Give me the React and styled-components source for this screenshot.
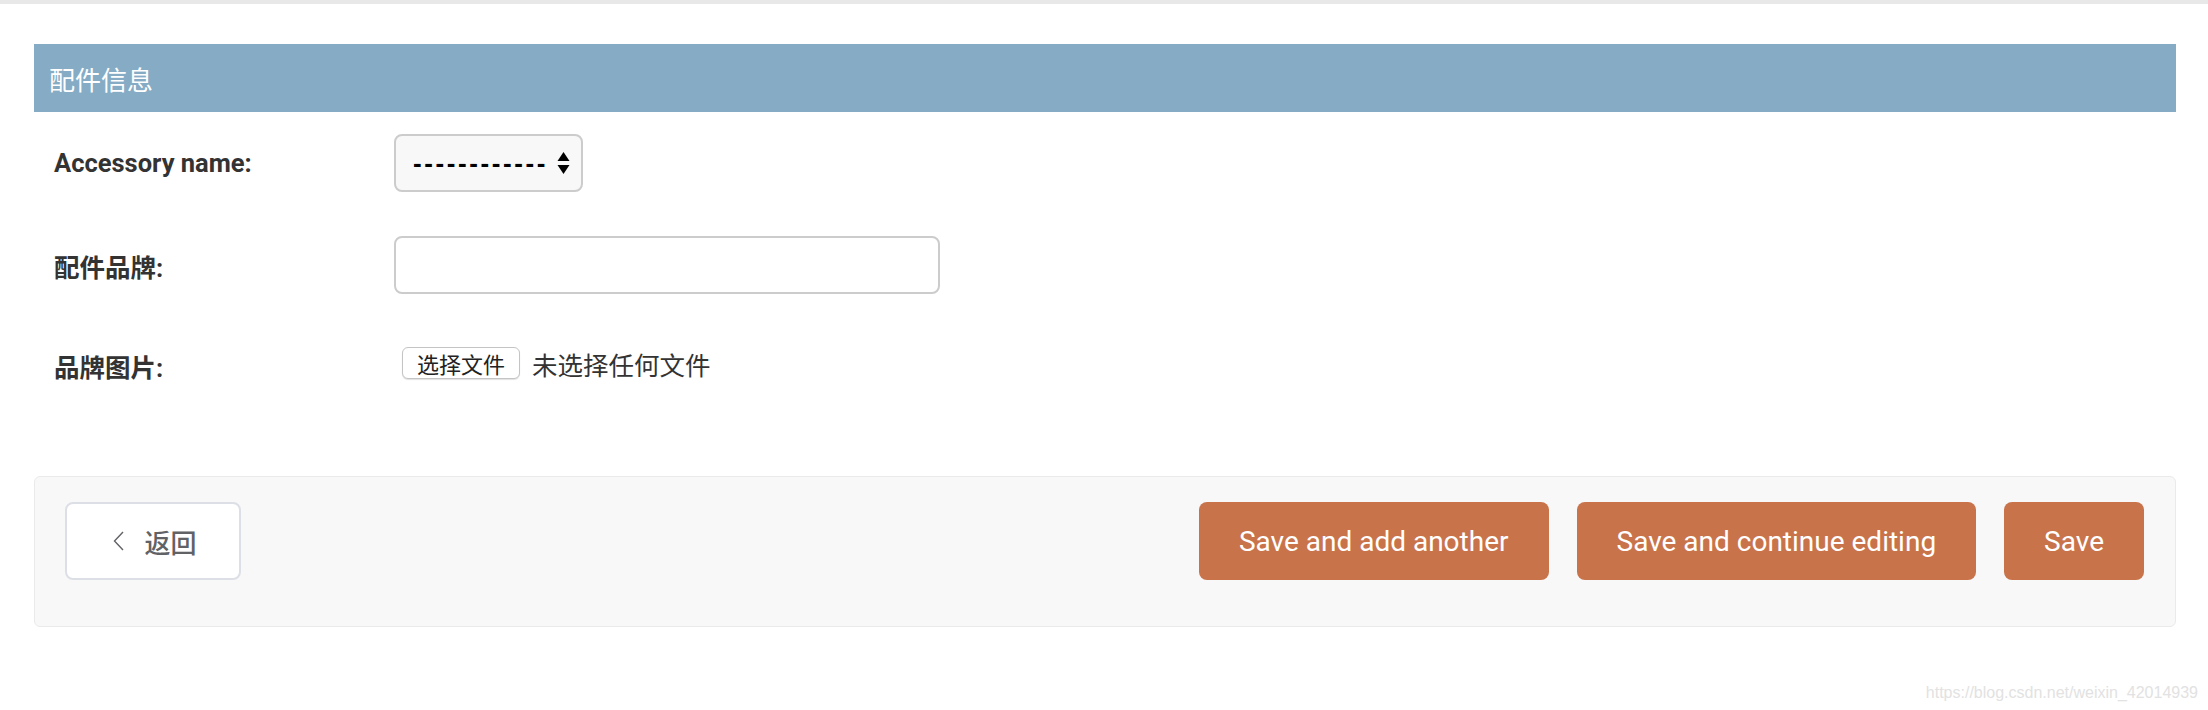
import React from "react";
import styled, { createGlobalStyle } from "styled-components";

const GlobalStyle = createGlobalStyle`
  html, body {
    margin: 0;
    padding: 0;
    background: #fff;
  }
  body {
    font-family: Roboto, "Noto Sans CJK SC", sans-serif;
    color: #333;
  }
`;

const Page = styled.div`
  position: relative;
  height: 710px;
  border-top: 4px solid #e8e8e8;
  box-sizing: border-box;
  padding: 40px 32px 0 34px;
`;

const Fieldset = styled.div`
  display: flex;
  flex-direction: column;
`;

const Caption = styled.h2`
  margin: 0;
  height: 68px;
  display: flex;
  align-items: center;
  padding-left: 15px;
  background: #85abc5;
  color: #fff;
  font-size: 26px;
  font-weight: 400;
`;

const Row = styled.div`
  display: flex;
  align-items: center;
  height: ${(p) => p.$height || 102}px;
  padding-left: 20px;
`;

const Label = styled.label`
  width: 340px;
  flex-shrink: 0;
  font-size: 25.5px;
  font-weight: 700;
  color: #333;
`;

const SelectBox = styled.div`
  width: 189px;
  height: 58px;
  box-sizing: border-box;
  border: 2px solid #ccc;
  border-radius: 8px;
  background: #f8f8f8;
  display: flex;
  align-items: center;
  padding: 0 8px 0 17px;
  gap: 9px;
`;

const Dashes = styled.span`
  white-space: nowrap;
  font-family: "Liberation Sans", sans-serif;
  font-size: 26px;
  font-weight: 700;
  letter-spacing: 2.6px;
  color: #000;
`;

const TextInput = styled.input`
  width: 546px;
  height: 58px;
  box-sizing: border-box;
  border: 2px solid #ccc;
  border-radius: 8px;
  background: #fff;
  outline: none;
`;

const FileField = styled.div`
  display: flex;
  align-items: center;
  gap: 12px;
  padding-left: 8px;
  margin-bottom: 4px;
`;

const FileButton = styled.button`
  height: 32px;
  width: 118px;
  box-sizing: border-box;
  border: 1px solid #c4c4c4;
  border-radius: 6px;
  background: #fff;
  box-shadow: 0 1px 1px rgba(0, 0, 0, 0.12);
  font-family: "Noto Sans CJK SC", sans-serif;
  font-size: 22px;
  line-height: 1;
  color: #222;
  padding: 0;
`;

const FileStatus = styled.span`
  font-family: "Noto Sans CJK SC", sans-serif;
  font-size: 25.5px;
  color: #333;
`;

const SubmitRow = styled.div`
  margin-top: 62px;
  display: flex;
  align-items: flex-start;
  background: #f8f8f8;
  border: 1px solid #eaeaea;
  border-radius: 6px;
  padding: 25px 31px 46px 30px;
`;

const BackButton = styled.button`
  height: 78px;
  width: 176px;
  box-sizing: border-box;
  display: flex;
  align-items: center;
  justify-content: center;
  gap: 20px;
  background: #fff;
  border: 2px solid #dcdfe6;
  border-radius: 8px;
  color: #606266;
  font-family: "Noto Sans CJK SC", sans-serif;
  font-size: 26px;
  font-weight: 500;
  padding: 0 0 0 4px;
`;

const Actions = styled.div`
  margin-left: auto;
  display: flex;
  gap: 28px;
`;

const SaveButton = styled.button`
  height: 78px;
  padding: 0 40px;
  border: none;
  border-radius: 8px;
  background: #c9734b;
  color: #fff;
  font-family: Roboto, sans-serif;
  font-size: 28px;
  font-weight: 400;
`;

const Watermark = styled.div`
  position: absolute;
  right: 10px;
  bottom: 8px;
  font-family: "Liberation Sans", sans-serif;
  font-size: 16px;
  color: #e2e2e2;
`;

const SortArrows = () => (
  <svg width="13" height="24" viewBox="0 0 13 24">
    <path d="M6.5 1 L12.5 10 L0.5 10 Z" fill="#000" />
    <path d="M0.5 14 L12.5 14 L6.5 23 Z" fill="#000" />
  </svg>
);

const ChevronLeft = () => (
  <svg width="11" height="20" viewBox="0 0 11 20">
    <path d="M10 1 L1.5 10 L10 19" fill="none" stroke="#606266" strokeWidth="1.4" />
  </svg>
);

export default function App() {
  return (
    <>
      <GlobalStyle />
      <Page>
        <Fieldset>
          <Caption>配件信息</Caption>
          <Row>
            <Label>Accessory name:</Label>
            <SelectBox>
              <Dashes>------------</Dashes>
              <SortArrows />
            </SelectBox>
          </Row>
          <Row>
            <Label>配件品牌:</Label>
            <TextInput type="text" />
          </Row>
          <Row $height={98}>
            <Label>品牌图片:</Label>
            <FileField>
              <FileButton>选择文件</FileButton>
              <FileStatus>未选择任何文件</FileStatus>
            </FileField>
          </Row>
        </Fieldset>
        <SubmitRow>
          <BackButton>
            <ChevronLeft />
            返回
          </BackButton>
          <Actions>
            <SaveButton>Save and add another</SaveButton>
            <SaveButton>Save and continue editing</SaveButton>
            <SaveButton>Save</SaveButton>
          </Actions>
        </SubmitRow>
        <Watermark>https://blog.csdn.net/weixin_42014939</Watermark>
      </Page>
    </>
  );
}
